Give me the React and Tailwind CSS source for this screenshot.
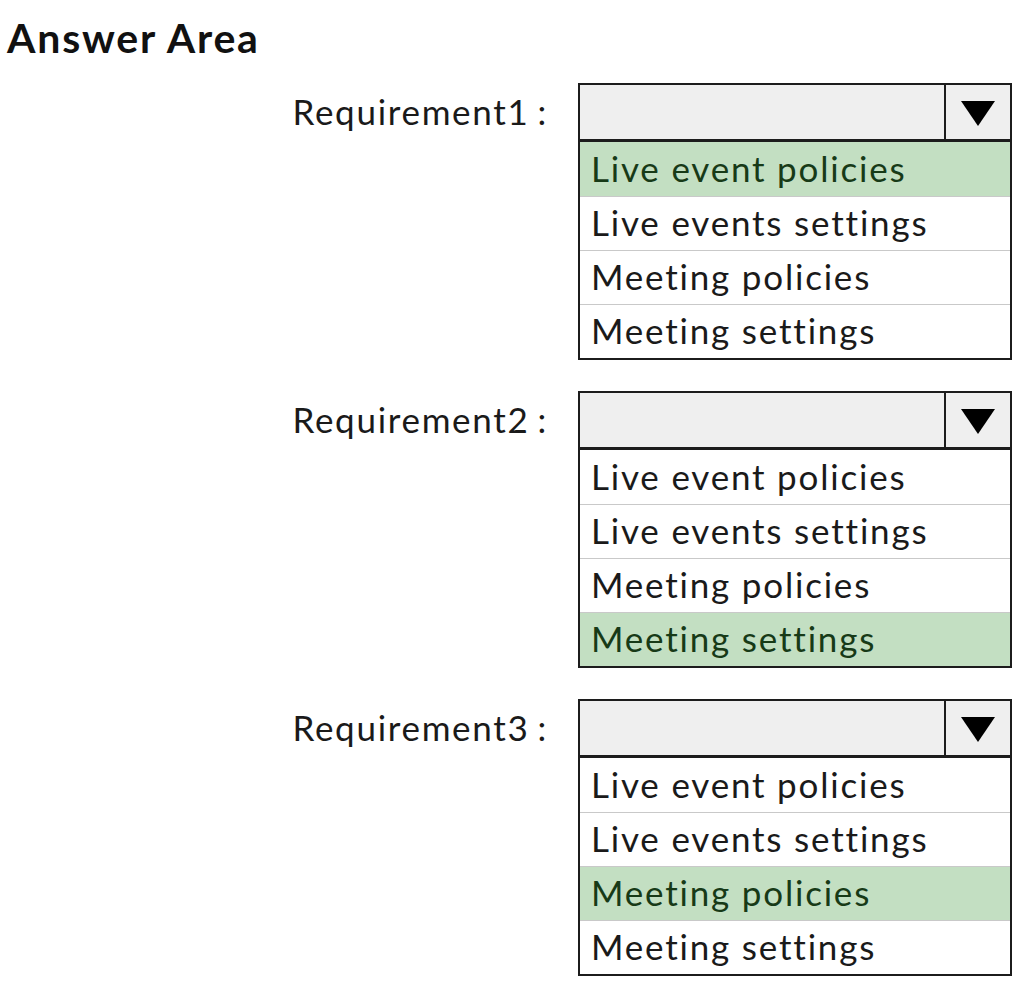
import React from "react";

const OPTIONS = [
  "Live event policies",
  "Live events settings",
  "Meeting policies",
  "Meeting settings",
];

const QUESTIONS = [
  { label: "Requirement1", selected: 0 },
  { label: "Requirement2", selected: 3 },
  { label: "Requirement3", selected: 2 },
];

function Caret() {
  return (
    <svg width="36" height="28" viewBox="0 0 36 28" aria-hidden="true">
      <polygon points="1,2 35,2 18,27" fill="#000" />
    </svg>
  );
}

function DropList({ selected }) {
  return (
    <div className="w-[434px] border-2 border-[#1c1c1c] bg-white">
      <div className="flex h-[57px] border-b-[3px] border-[#1c1c1c] bg-[#efefef]">
        <div className="flex-1" />
        <div className="flex w-[66px] items-center justify-center border-l-2 border-[#1c1c1c] pt-[2px]">
          <Caret />
        </div>
      </div>
      {OPTIONS.map((opt, i) => (
        <div
          key={opt}
          className={
            "flex h-[54px] items-center pb-[2px] pl-[11px] text-[35px] leading-none tracking-[1.8px] " +
            (i > 0 ? "border-t border-[#c9c9c9] " : "") +
            (i === selected
              ? "bg-[#c3dfc2] text-[#173a17]"
              : "text-[#1a1a1a]")
          }
        >
          {opt}
        </div>
      ))}
    </div>
  );
}

export default function App() {
  return (
    <div
      className="min-h-[981px] w-[1020px] bg-white"
      style={{ fontFamily: "Lato, 'Noto Sans CJK SC', sans-serif" }}
    >
      <h1 className="pl-[7px] pt-[12px] text-[41px] font-bold leading-tight tracking-[1.8px] text-[#111]">
        Answer Area
      </h1>
      <div className="mt-[20px] flex flex-col gap-[31px]">
        {QUESTIONS.map((q) => (
          <div key={q.label} className="flex">
            <div className="flex h-[57px] w-[548px] items-center justify-end text-[35px] leading-none tracking-[1.7px] text-[#1a1a1a]">
              {q.label}
              <span className="ml-[8px]">:</span>
            </div>
            <div className="ml-[30px]">
              <DropList selected={q.selected} />
            </div>
          </div>
        ))}
      </div>
    </div>
  );
}
